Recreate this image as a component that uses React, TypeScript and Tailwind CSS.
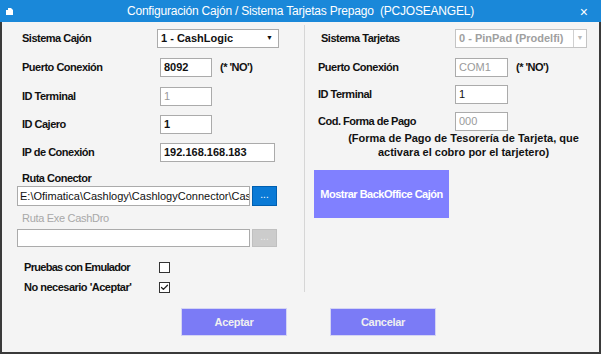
import { Check } from "lucide-react";

const lbl = "text-[11px] font-bold tracking-[-0.5px] text-[#111] whitespace-nowrap";

function Field({ value, w, muted, bold = true }: { value: string; w: string; muted?: boolean; bold?: boolean }) {
  return (
    <div
      className={`flex h-[19px] items-center border border-[#ababab] bg-white px-[3px] text-[11px] ${w} ${
        bold ? "font-bold" : ""
      } ${muted ? "text-[#9a9a9a]" : "text-[#111]"}`}
    >
      {value}
    </div>
  );
}

function Row({ label, children, className = "", lw = "w-[138px]" }: { label: string; children: React.ReactNode; className?: string; lw?: string }) {
  return (
    <div className={`flex h-[19px] items-center ${className}`}>
      <span className={`${lw} shrink-0 ${lbl}`}>{label}</span>
      {children}
    </div>
  );
}

function Box({ checked }: { checked?: boolean }) {
  return (
    <div className="flex h-[11px] w-[11px] items-center justify-center border border-[#333] bg-white">
      {checked && <Check size={9} strokeWidth={3.5} className="text-[#222]" />}
    </div>
  );
}

export default function App() {
  return (
    <div className="flex h-[354px] w-[601px] flex-col bg-[#f4f4f4] font-['Liberation_Sans',Arial,sans-serif]">
      {/* title bar */}
      <div className="relative flex h-[22px] shrink-0 items-center justify-center bg-[#1a88d9] text-white">
        <svg width="9" height="9" viewBox="0 0 9 9" className="absolute left-[5px] top-[7px]">
          <path d="M1 1h5l2 2v5H1z" fill="white" />
          <path d="M1 1h2v2H1z" fill="#1a88d9" />
        </svg>
        <span className="text-[12px] tracking-[-0.2px]">
          Configuración Cajón / Sistema Tarjetas Prepago&nbsp; (PCJOSEANGEL)
        </span>
        <span className="absolute right-[13px] top-[2px] text-[14px]">×</span>
      </div>

      {/* body */}
      <div className="flex flex-1 flex-col border-x-2 border-b-2 border-[#3a3a3a]">
        <div className="flex h-[270px]">
          {/* left column */}
          <div className="flex w-[302px] flex-col pl-[20px]">
            <Row label="Sistema Cajón" className="mt-[7px]" lw="w-[135px]">
              <div className="flex h-[19px] w-[122px] items-center justify-between border border-[#ababab] bg-white pl-[3px] pr-[5px] text-[11px] font-bold text-[#111]">
                1 - CashLogic
                <span className="text-[7px]">▼</span>
              </div>
            </Row>
            <Row label="Puerto Conexión" className="mt-[10px]">
              <Field value="8092" w="w-[52px]" />
              <span className={`ml-[8px] ${lbl}`}>(* 'NO')</span>
            </Row>
            <Row label="ID Terminal" className="mt-[10px]">
              <Field value="1" w="w-[52px]" muted bold={false} />
            </Row>
            <Row label="ID Cajero" className="mt-[9px]">
              <Field value="1" w="w-[52px]" />
            </Row>
            <Row label="IP de Conexión" className="mt-[9px]">
              <Field value="192.168.168.183" w="w-[115px]" />
            </Row>
            <span className={`mt-[10px] h-[13px] leading-[13px] ${lbl}`}>Ruta Conector</span>
            <div className="-ml-[5px] mt-[1px] flex h-[20px] gap-[2px]">
              <div className="flex w-[233px] items-center overflow-hidden whitespace-nowrap border border-[#ababab] bg-white pl-[2px] text-[11px] text-[#111]">
                E:\Ofimatica\Cashlogy\CashlogyConnector\CashlogyConnector.exe
              </div>
              <div className="flex w-[25px] items-center justify-center border border-[#005fb0] bg-[#0a7ad6] pb-[4px] text-[10px] text-white">
                ...
              </div>
            </div>
            <span className="mt-[6px] h-[13px] text-[11px] leading-[13px] tracking-[-0.3px] text-[#a8a8a8]">Ruta Exe CashDro</span>
            <div className="-ml-[5px] mt-[4px] flex h-[18px] gap-[2px]">
              <div className="w-[233px] border border-[#ababab] bg-white" />
              <div className="flex w-[25px] items-center justify-center border border-[#c0c0c0] bg-[#cccccc] pb-[4px] text-[10px] text-[#e8e8e8]">
                ...
              </div>
            </div>
            <div className="mt-[14px] flex h-[13px] items-center pl-[2px]">
              <span className={`w-[135px] ${lbl} tracking-[-0.7px]`}>Pruebas con Emulador</span>
              <Box />
            </div>
            <div className="mt-[7px] flex h-[13px] items-center pl-[2px]">
              <span className={`w-[135px] ${lbl}`}>No necesario 'Aceptar'</span>
              <Box checked />
            </div>
          </div>

          {/* divider */}
          <div className="mt-[3px] w-px bg-[#d6d6d6]" />

          {/* right column */}
          <div className="flex flex-1 flex-col pl-[13px]">
            <div className="mt-[7px] flex h-[19px] items-center">
              <span className={`w-[137px] pl-[3px] ${lbl}`}>Sistema Tarjetas</span>
              <div className="flex h-[19px] w-[132px] items-center justify-between border border-[#c4c4c4] bg-white pl-[3px] text-[11px] font-bold text-[#a0a0a0]">
                0 - PinPad (Prodelfi)
                <span className="flex h-full w-[13px] items-center justify-center border-l border-[#d0d0d0] text-[7px] text-[#b8b8b8]">
                  ▼
                </span>
              </div>
            </div>
            <Row label="Puerto Conexión" className="mt-[10px]" lw="w-[137px]">
              <Field value="COM1" w="w-[53px]" muted bold={false} />
              <span className={`ml-[8px] ${lbl}`}>(* 'NO')</span>
            </Row>
            <Row label="ID Terminal" className="mt-[8px]" lw="w-[137px]">
              <Field value="1" w="w-[53px]" bold={false} />
            </Row>
            <Row label="Cod. Forma de Pago" className="mt-[8px]" lw="w-[137px]">
              <Field value="000" w="w-[53px]" muted bold={false} />
            </Row>
            <p className="pl-[10px] text-center text-[11px] font-bold leading-[14px] text-[#111]">
              (Forma de Pago de Tesorería de Tarjeta, que
              <br />
              activara el cobro por el tarjetero)
            </p>
            <div className="-ml-[4px] mt-[11px] flex h-[48px] w-[135px] items-center justify-center whitespace-nowrap bg-[#8080ff] text-[11px] font-bold tracking-[-0.5px] text-white">
              Mostrar BackOffice Cajón
            </div>
          </div>
        </div>

        {/* bottom buttons */}
        <div className="mt-[16px] flex justify-center gap-[43px] pl-[16px]">
          <div className="flex h-[28px] w-[106px] items-center justify-center border border-[#d4d4f4] bg-[#7b7bf6] text-[11px] font-bold tracking-[-0.3px] text-[#f0f0f0]">
            Aceptar
          </div>
          <div className="flex h-[28px] w-[106px] items-center justify-center border border-[#d4d4f4] bg-[#7b7bf6] text-[11px] font-bold tracking-[-0.3px] text-[#f0f0f0]">
            Cancelar
          </div>
        </div>
      </div>
    </div>
  );
}
